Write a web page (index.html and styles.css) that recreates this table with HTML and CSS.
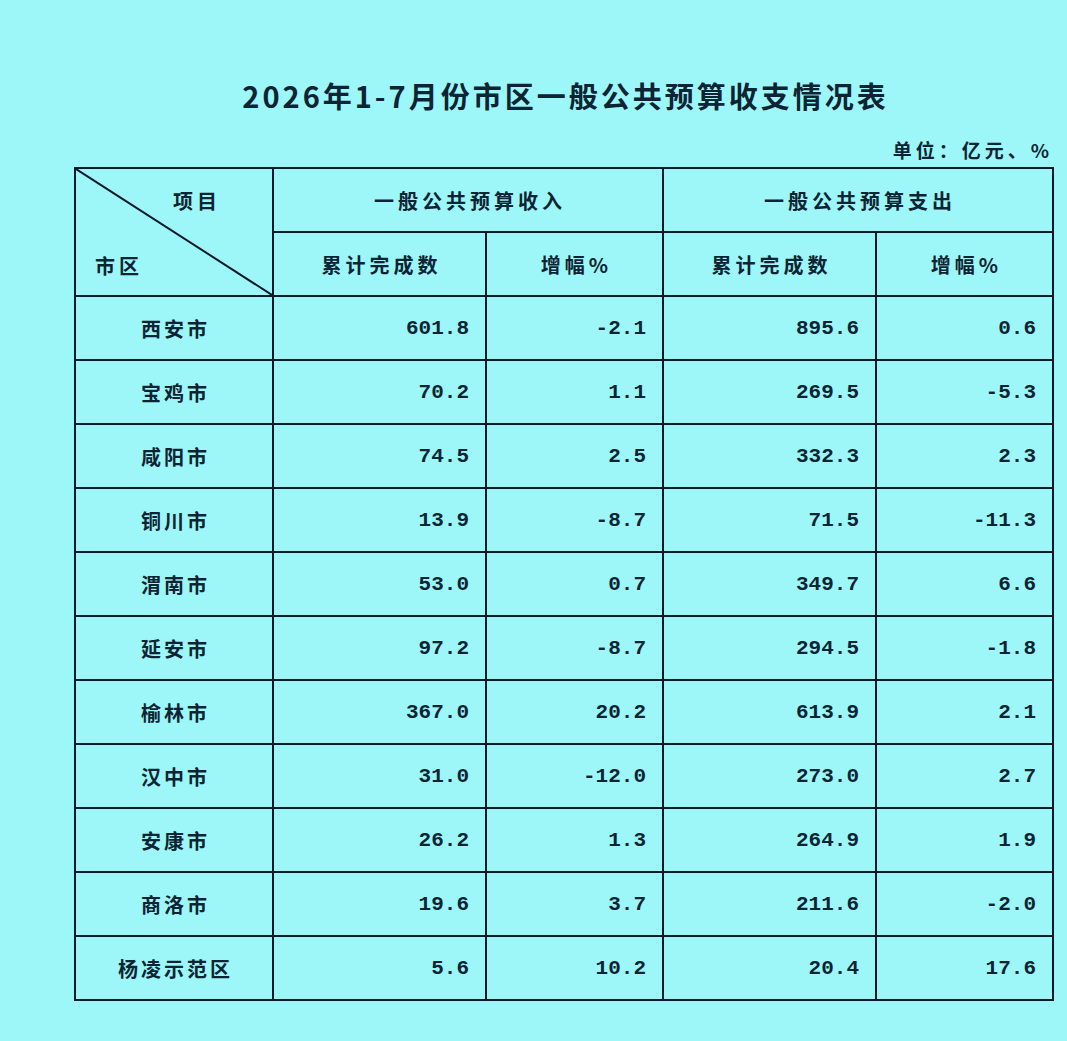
FILE: index.html
```html
<!DOCTYPE html>
<html lang="zh">
<head>
<meta charset="utf-8">
<title>2026年1-7月份市区一般公共预算收支情况表</title>
<link rel="stylesheet" href="styles.css">
</head>
<body>
<div class="sheet">
  <h1 class="title">2026年1-7月份市区一般公共预算收支情况表</h1>
  <div class="unit">单位：亿元、%</div>
  <table class="budget">
    <colgroup>
      <col class="c-name"><col class="c-num"><col class="c-pct"><col class="c-num"><col class="c-pct">
    </colgroup>
    <thead>
      <tr>
        <th rowspan="2" class="corner">
          <svg class="diag" viewBox="0 0 100 100" preserveAspectRatio="none"><line x1="0" y1="0" x2="100" y2="100" vector-effect="non-scaling-stroke"/></svg>
          <span class="corner-top">项目</span>
          <span class="corner-bottom">市区</span>
        </th>
        <th colspan="2">一般公共预算收入</th>
        <th colspan="2">一般公共预算支出</th>
      </tr>
      <tr>
        <th>累计完成数</th>
        <th>增幅%</th>
        <th>累计完成数</th>
        <th>增幅%</th>
      </tr>
    </thead>
    <tbody>
      <tr><td class="name">西安市</td><td>601.8</td><td>-2.1</td><td>895.6</td><td>0.6</td></tr>
      <tr><td class="name">宝鸡市</td><td>70.2</td><td>1.1</td><td>269.5</td><td>-5.3</td></tr>
      <tr><td class="name">咸阳市</td><td>74.5</td><td>2.5</td><td>332.3</td><td>2.3</td></tr>
      <tr><td class="name">铜川市</td><td>13.9</td><td>-8.7</td><td>71.5</td><td>-11.3</td></tr>
      <tr><td class="name">渭南市</td><td>53.0</td><td>0.7</td><td>349.7</td><td>6.6</td></tr>
      <tr><td class="name">延安市</td><td>97.2</td><td>-8.7</td><td>294.5</td><td>-1.8</td></tr>
      <tr><td class="name">榆林市</td><td>367.0</td><td>20.2</td><td>613.9</td><td>2.1</td></tr>
      <tr><td class="name">汉中市</td><td>31.0</td><td>-12.0</td><td>273.0</td><td>2.7</td></tr>
      <tr><td class="name">安康市</td><td>26.2</td><td>1.3</td><td>264.9</td><td>1.9</td></tr>
      <tr><td class="name">商洛市</td><td>19.6</td><td>3.7</td><td>211.6</td><td>-2.0</td></tr>
      <tr><td class="name">杨凌示范区</td><td>5.6</td><td>10.2</td><td>20.4</td><td>17.6</td></tr>
    </tbody>
  </table>
</div>
</body>
</html>
```

FILE: styles.css
```css
html, body {
  margin: 0;
  padding: 0;
  background: #9df7f8;
}
body {
  color: #0c2433;
  font-family: "Noto Sans CJK SC", "Noto Sans", sans-serif;
  height: 1041px;
  overflow: hidden;
}
.sheet {
  width: 978px;
  margin-left: 75px;
  padding-top: 75px;
}
.title {
  margin: 0;
  height: 40px;
  line-height: 40px;
  font-size: 29px;
  font-weight: 700;
  text-align: center;
  letter-spacing: 3px;
  text-indent: 3px;
}
.unit {
  margin-top: 23px;
  height: 29px;
  line-height: 24px;
  text-align: right;
  font-size: 19px;
  font-weight: 700;
  letter-spacing: 4px;
  margin-right: 0;
}
.budget {
  border-collapse: collapse;
  width: 980px;
  margin-left: -1px;
  table-layout: fixed;
}
.c-name { width: 198px; }
.c-num { width: 213px; }
.c-pct { width: 177px; }
.budget th, .budget td {
  border: 2px solid #0a1a28;
  height: 62px;
  padding: 0;
  font-size: 20px;
  font-weight: 700;
}
.budget th {
  text-align: center;
  letter-spacing: 4px;
  text-indent: 4px;
}
.budget td {
  text-align: right;
  padding-right: 16px;
  font-family: "Liberation Mono", "DejaVu Sans Mono", monospace;
  font-size: 21px;
  font-weight: 700;
  letter-spacing: 0;
}
.budget td.name {
  text-align: center;
  padding-right: 0;
  font-family: "Noto Sans CJK SC", "Noto Sans", sans-serif;
  font-size: 20px;
  letter-spacing: 3px;
  text-indent: 3px;
}
.corner {
  position: relative;
}
.diag {
  position: absolute;
  left: 0;
  top: 0;
  width: 100%;
  height: 100%;
}
.diag line {
  stroke: #0a1a28;
  stroke-width: 2;
}
.corner-top {
  position: absolute;
  left: 93px;
  top: 17px;
}
.corner-bottom {
  position: absolute;
  left: 15px;
  top: 82px;
}
```
